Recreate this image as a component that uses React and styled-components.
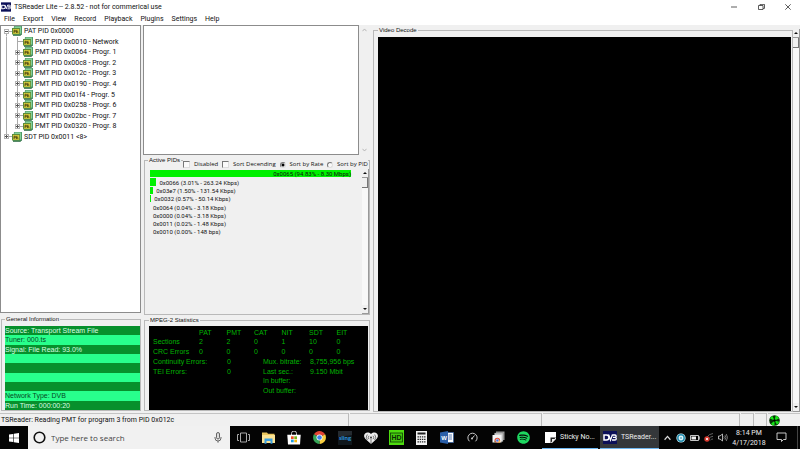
import styled, { createGlobalStyle, css } from "styled-components";
import { FaSpotify } from "react-icons/fa";

const uiFont = `Roboto, "Noto Sans", sans-serif`;
const classicFont = `"Liberation Sans", Arial, sans-serif`;
const optionFont = `"Open Sans", "Noto Sans", sans-serif`;

const GlobalStyle = createGlobalStyle`
	*, *::before, *::after { box-sizing: border-box; }
	body { margin: 0; background: #f0f0f0; color: #111; font-family: ${classicFont}; font-size: 7px; }
	button, input { font: inherit; color: inherit; }
	button { border: 0; padding: 0; background: none; }
	svg { display: block; flex: none; }
`;

const treeItems = [
	{ label: "PAT PID 0x0000", level: 0, sign: "-", line: "first" },
	{ label: "PMT PID 0x0010 - Network", level: 1 },
	{ label: "PMT PID 0x0064 - Progr. 1", level: 1, sign: "+" },
	{ label: "PMT PID 0x00c8 - Progr. 2", level: 1, sign: "+" },
	{ label: "PMT PID 0x012c - Progr. 3", level: 1, sign: "+" },
	{ label: "PMT PID 0x0190 - Progr. 4", level: 1, sign: "+" },
	{ label: "PMT PID 0x01f4 - Progr. 5", level: 1, sign: "+" },
	{ label: "PMT PID 0x0258 - Progr. 6", level: 1, sign: "+" },
	{ label: "PMT PID 0x02bc - Progr. 7", level: 1, sign: "+" },
	{ label: "PMT PID 0x0320 - Progr. 8", level: 1, sign: "+", line: "last" },
	{ label: "SDT PID 0x0011 <8>", level: 0, sign: "+", line: "last" },
];

const pids = [
	{ share: 94.83, label: "0x0065 (94.83% - 8.30 Mbps)" },
	{ share: 3.01, label: "0x0066 (3.01% - 263.24 Kbps)" },
	{ share: 1.5, label: "0x03e7 (1.50% - 131.54 Kbps)" },
	{ share: 0.57, label: "0x0032 (0.57% - 50.14 Kbps)" },
	{ share: 0.04, label: "0x0064 (0.04% - 3.18 Kbps)" },
	{ share: 0.04, label: "0x0000 (0.04% - 3.18 Kbps)" },
	{ share: 0.02, label: "0x0011 (0.02% - 1.48 Kbps)" },
	{ share: 0, label: "0x0010 (0.00% - 148 bps)" },
];

const infoRows = [
	"Source: Transport Stream File",
	"Tuner: 000.ts",
	"Signal: File Read: 93.0%",
	"",
	"",
	"",
	"",
	"Network Type: DVB",
	"Run Time: 000:00:20",
];

const tables = ["PAT", "PMT", "CAT", "NIT", "SDT", "EIT"];
const counters = [
	{ name: "Sections", values: [2, 2, 0, 1, 10, 0] },
	{ name: "CRC Errors", values: [0, 0, 0, 0, 0, 0] },
];

/* window frame */

const Desktop = styled.div`
	display: flex;
	flex-direction: column;
	height: 100vh;
	overflow: hidden;
`;

const TitleBar = styled.header`
	display: flex;
	align-items: center;
	gap: 3px;
	height: 13px;
	flex: none;
	padding-left: 1px;
	background: #fff;
	font-family: ${uiFont};
	font-size: 7px;
`;

const Title = styled.h1`
	margin: 0;
	flex: 1;
	font-size: 7px;
	font-weight: 400;
	line-height: 12px;
	white-space: nowrap;
`;

const WindowButton = styled.button`
	display: flex;
	align-items: center;
	justify-content: center;
	width: 24px;
	height: 12px;
`;

const MenuBar = styled.nav`
	display: flex;
	align-items: center;
	gap: 8px;
	height: 12px;
	flex: none;
	padding-left: 4px;
	background: #fff;
	font-family: ${uiFont};
	font-size: 7px;
`;

const MenuItem = styled.button`
	line-height: 12px;
`;

const Workspace = styled.main`
	display: grid;
	grid-template-columns: 141px 228px minmax(0, 1fr);
	gap: 2px;
	flex: 1;
	min-height: 0;
`;

const Column = styled.div`
	display: flex;
	flex-direction: ${(p) => (p.$row ? "row" : "column")};
	min-width: 0;
	min-height: 0;
`;

const Group = styled.fieldset`
	display: flex;
	flex-direction: column;
	min-width: 0;
	min-height: 0;
	margin: ${(p) => p.$margin || "0"};
	padding: ${(p) => p.$padding || "0"};
	border: 1px solid #b9b9b9;
	flex: ${(p) => (p.$grow ? "1" : "none")};
`;

const GroupLabel = styled.legend`
	margin-left: ${(p) => p.$indent || "0"};
	padding: 0 1px;
	font-size: 6px;
	line-height: 8px;
`;

/* tree */

const TreePanel = styled.div`
	flex: 1;
	min-height: 0;
	margin-bottom: 2px;
	background: #fff;
	border: 1px solid #8c8c8c;
`;

const Tree = styled.ul`
	display: grid;
	grid-auto-rows: 1fr;
	height: 116px;
	margin: 0;
	padding: 0;
	list-style: none;
	font-family: ${uiFont};
`;

const TreeRow = styled.li`
	display: flex;
	align-items: stretch;
	white-space: nowrap;
`;

const Branch = styled.span`
	display: flex;
	align-items: center;
	justify-content: center;
	width: 11px;
	background-image: ${(p) => (p.$stub ? "linear-gradient(#aaa, #aaa)," : "")}
		linear-gradient(#aaa, #aaa);
	background-repeat: no-repeat;
	background-size: ${(p) => (p.$stub ? "6px 1px," : "")} 1px ${(p) => (p.$line ? "50%" : "100%")};
	background-position: ${(p) => (p.$stub ? "right center," : "")} 5px ${(p) => (p.$line === "first" ? "100%" : "0")};
`;

const Expander = styled.button`
	display: flex;
	background: #fff;
`;

const TreeLabel = styled.span`
	display: flex;
	align-items: center;
	gap: 2px;
`;

/* list and scrollbars */

const ListRow = styled.div`
	display: flex;
	height: 130px;
	flex: none;
	margin-bottom: 1px;
`;

const ListBox = styled.div`
	flex: 1;
	background: #fff;
	border: 1px solid #8c8c8c;
`;

const FlatScroll = styled.div`
	display: flex;
	flex-direction: column;
	align-items: center;
	justify-content: space-between;
	width: 12px;
	padding: 3px 2px 3px 0;
`;

const Scroll = styled.div`
	display: flex;
	flex-direction: column;
	width: 7px;
	flex: none;
	margin-top: ${(p) => p.$top || "0"};
	background: #f8f8f8;
	border-right: 1px solid #999;
`;

const ScrollButton = styled.button`
	display: flex;
	align-items: center;
	justify-content: center;
	height: 9px;
	background: #f0f0f0;
	border-bottom: 1px solid #999;
`;

const ScrollThumb = styled.div`
	height: 10px;
	margin-bottom: auto;
	background: #f0f0f0;
	border-right: 1px solid #777;
	border-bottom: 1px solid #777;
`;

/* active pids */

const Options = styled.div`
	display: flex;
	align-items: center;
	justify-content: space-between;
	height: 9px;
	margin: -4px 1px 0 38px;
	background: #f0f0f0;
	font-family: ${optionFont};
	font-size: 6px;
`;

const Option = styled.label`
	display: flex;
	align-items: center;
	gap: 4px;
	white-space: nowrap;
	line-height: 9px;
`;

const Tick = styled.input`
	appearance: none;
	width: 7px;
	height: 7px;
	margin: 0;
	background: #fafafa;
	border: 1px solid #ddd;
	border-top-color: #777;
	border-left-color: #777;
`;

const Radio = styled(Tick)`
	width: 6px;
	height: 6px;
	border-radius: 50%;
	&:checked {
		background: radial-gradient(circle, #000 0 1px, #fff 2px);
	}
`;

const PidArea = styled.div`
	display: flex;
	flex: 1;
	min-height: 0;
`;

const PidList = styled.ul`
	display: grid;
	grid-auto-rows: 1fr;
	flex: 1;
	height: 66px;
	margin: 1px 0 0 5px;
	padding: 0;
	list-style: none;
	font-family: ${uiFont};
	font-size: 6px;
`;

const PidRow = styled.li`
	display: flex;
	align-items: center;
	gap: 3px;
	min-width: 0;
	white-space: nowrap;
`;

const PidBar = styled.span`
	display: flex;
	flex: none;
	align-items: center;
	justify-content: flex-end;
	align-self: stretch;
	margin-bottom: 1px;
	background: #00f000;
`;

/* general information */

const InfoList = styled.ul`
	display: grid;
	grid-auto-rows: 1fr;
	height: 84px;
	margin: 0;
	padding: 0;
	list-style: none;
`;

const InfoRow = styled.li`
	display: flex;
	align-items: center;
	white-space: nowrap;
	background: #28ff8c;
	color: #06491f;
	&:nth-child(odd) {
		background: #07902c;
		color: #d8ffe4;
	}
`;

/* statistics */

const StatsScreen = styled.div`
	height: 84px;
	padding: 2px 4px;
	background: #000;
	color: #00b400;
`;

const StatsTable = styled.table`
	table-layout: fixed;
	width: 100%;
	height: 28px;
	border-collapse: collapse;
	th, td {
		padding: 0;
		text-align: left;
		font-weight: 400;
		line-height: 9px;
	}
	th:first-child {
		width: 46px;
	}
`;

const Totals = styled.dl`
	display: grid;
	grid-template-columns: 74px 36px 47px 1fr;
	grid-auto-rows: 1fr;
	height: 38px;
	margin: 1px 0 0;
	line-height: 9px;
	white-space: nowrap;
	dd {
		margin: 0;
	}
	dt.right {
		grid-column: 3;
	}
`;

/* video */

const VideoScreen = styled.div`
	flex: 1;
	background: #000;
`;

/* status bar */

const StatusBar = styled.footer`
	display: grid;
	grid-template-columns: 349fr 193fr 197fr 13px 12px 32px;
	gap: 1px;
	height: 14px;
	flex: none;
	padding-top: 1px;
	background: #f0f0f0;
	font-family: ${uiFont};
	font-size: 7px;
`;

const StatusCell = styled.div`
	display: flex;
	align-items: center;
	padding-left: 1px;
	border-top: 1px solid #c4c4c4;
	border-right: ${(p) => (p.$last ? "0" : "1px solid #bbb")};
	line-height: 10px;
	white-space: nowrap;
`;

/* task bar */

const TaskBar = styled.nav`
	display: flex;
	height: 23px;
	flex: none;
	background: #040404;
	color: #eee;
	font-family: ${uiFont};
	font-size: 7px;
`;

const StartButton = styled.button`
	display: flex;
	align-items: center;
	justify-content: center;
	width: 28px;
`;

const SearchBox = styled.label`
	display: flex;
	align-items: center;
	gap: 5px;
	width: 202px;
	padding: 0 8px 0 5px;
	background: #f1f1f1;
	color: #333;
`;

const SearchInput = styled.input`
	flex: 1;
	min-width: 0;
	padding: 0;
	border: 0;
	outline: 0;
	background: none;
	font-family: ${optionFont};
	font-size: 8px;
	&::placeholder {
		color: #444;
		opacity: 1;
	}
`;

const AppIcons = styled.div`
	display: flex;
	justify-content: space-between;
	width: 308px;
	padding: 0 2px 0 1px;
`;

const AppButton = styled.button`
	display: flex;
	align-items: center;
	justify-content: center;
	width: 25px;
`;

const TaskButton = styled.button`
	display: flex;
	align-items: center;
	gap: 4px;
	padding: 0 4px 0 3px;
	width: ${(p) => p.$width};
	margin-left: ${(p) => p.$space || "0"};
	border-bottom: 1px solid #6fb7f0;
	white-space: nowrap;
	${(p) => p.$active && css`
		background: #34373a;
	`}
`;

const Tray = styled.div`
	display: flex;
	align-items: center;
	justify-content: flex-end;
	flex: 1;
	padding-right: 2px;
`;

const TrayButton = styled.button`
	display: flex;
	align-items: center;
	justify-content: center;
	width: 14px;
	height: 100%;
`;

const Clock = styled.time`
	width: 38px;
	text-align: center;
	line-height: 10px;
`;

const Notifications = styled(TrayButton)`
	width: 27px;
	margin-right: 2px;
`;

const ShowDesktop = styled.button`
	width: 1px;
	height: 100%;
	background: #444;
`;

/* drawings */

function DvbLogo({ width = 10, height = 10 }) {
	return (
		<svg width={width} height={height} viewBox="0 0 14 13">
			<rect width="14" height="13" fill="#0c1058" />
			<path d="M1 4h2.5a2.5 2.5 0 0 1 0 5H1z" fill="none" stroke="#fff" strokeWidth="1.5" />
			<path d="M5.5 3.5 7.5 9 9.5 3.5" fill="none" stroke="#fff" strokeWidth="1.3" />
			<path d="M9.5 4H12a1.2 1.2 0 0 1 0 2.4h-2H12A1.3 1.3 0 0 1 12 9H9" fill="none" stroke="#fff" strokeWidth="1.3" />
		</svg>
	);
}

function TableIcon() {
	return (
		<svg width="10" height="10" viewBox="0 0 10 10">
			<path d="M2 0h8v8L8.500 9.500H1V8z" fill="#4f9a68" />
			<path d="M2.500.500h6.500v7H8V2.200H2.500z" fill="#86d098" />
			<path d="M0 2h8v6.500H0z" fill="#5c8d3c" />
			<path d="M1 3h6.200v4.800H1z" fill="#d6cc3c" />
			<path d="M2 7V4.300h1.400v1.400H2M4.500 7V4.300h1M4.500 5.600h1.300V7" fill="none" stroke="#4a4410" strokeWidth=".8" />
			<path d="M1 9.300h7.500L9.700 8" fill="none" stroke="#2b6640" strokeWidth=".8" />
		</svg>
	);
}

function SignIcon({ sign }) {
	return (
		<svg width="5" height="5" viewBox="0 0 5 5" shapeRendering="crispEdges">
			<rect width="5" height="5" fill="#b4b4b4" />
			<rect x="1" y="1" width="3" height="3" fill="#fff" />
			<path d="M1 2h3v1H1z" fill="#555" />
			{sign === "+" && <path d="M2 1h1v3H2z" fill="#555" />}
		</svg>
	);
}

function Arrow({ down }) {
	return (
		<svg width="4" height="2" viewBox="0 0 4 2">
			<path d={down ? "M0 0h4L2 2z" : "M0 2h4L2 0z"} fill="#111" />
		</svg>
	);
}

function Chevron({ down, color = "#aaa", width = 5 }) {
	return (
		<svg width={width} height={width - 1} viewBox="0 0 6 5">
			<path d={down ? "M.5 1 3 3.8 5.5 1" : "M.5 4 3 1.2 5.5 4"} fill="none" stroke={color} />
		</svg>
	);
}

function RadiationIcon() {
	return (
		<svg width="11" height="11" viewBox="-5.5 -5.5 11 11">
			<circle r="5.3" fill="#063306" />
			<path d="M0 0-4.6-2A5 5 0 0 1-2-4.6zM0 0 1.2-4.9A5 5 0 0 1 4.6-2zM0 0 4.8 1.2A5 5 0 0 1 2.5 4.3zM0 0 0 5A5 5 0 0 1-3.6 3.4z" fill="#16e316" />
			<circle r="1.3" fill="#000" />
		</svg>
	);
}

const WindowsLogo = () => (
	<svg width="10" height="10" viewBox="0 0 10 10">
		<path d="M0 1.5 4.2.9v3.8H0zM4.8.8 10 0v4.7H4.8zM0 5.3h4.2v3.8L0 8.5zM4.8 5.3H10V10l-5.2-.8z" fill="#fff" />
	</svg>
);

const CortanaIcon = () => (
	<svg width="13" height="13" viewBox="0 0 13 13">
		<circle cx="6.5" cy="6.5" r="5.3" fill="none" stroke="#111" strokeWidth="1.6" />
	</svg>
);

const MicIcon = () => (
	<svg width="8" height="11" viewBox="0 0 8 11">
		<rect x="2.5" y=".5" width="3" height="6.5" rx="1.5" fill="#ddd" stroke="#444" strokeWidth=".8" />
		<path d="M1 5v1a3 3 0 0 0 6 0V5M4 9v1.7" fill="none" stroke="#444" strokeWidth=".8" />
	</svg>
);

const TaskViewIcon = () => (
	<svg width="13" height="11" viewBox="0 0 13 11">
		<path d="M3.5 1h6v9h-6zM2 2.5H.5v6H2M11 2.5h1.5v6H11" fill="none" stroke="#bbb" strokeWidth=".9" />
	</svg>
);

const FolderIcon = () => (
	<svg width="13" height="12" viewBox="0 0 13 12">
		<path d="M0 .5h5l1 1.3h6.5V11H0z" fill="#e8c45c" />
		<path d="M0 3h13v8H0z" fill="#fbe394" />
		<path d="M2.500 11.800V6.500h8v5.300H8.500V9h-4v2.800z" fill="#3c9fdf" />
	</svg>
);

const StoreIcon = () => (
	<svg width="14" height="14" viewBox="0 0 14 14">
		<path d="M4.5 4V2.5a2 2 0 0 1 5 0V4" fill="none" stroke="#ccc" />
		<path d="M.3 3.7h13.4L13 13.5H1z" fill="#fff" />
		<path d="M4 5.3h2.7V8H4z" fill="#ed4f24" />
		<path d="M7.3 5.3H10V8H7.3z" fill="#74b51c" />
		<path d="M4 8.6h2.7v2.7H4z" fill="#1e9fe3" />
		<path d="M7.3 8.6H10v2.7H7.3z" fill="#f5b60d" />
	</svg>
);

const ChromeIcon = () => (
	<svg width="13" height="13" viewBox="-6.5 -6.5 13 13">
		<path d="M0 0-5.6-3.2A6.5 6.5 0 0 1 5.6-3.2z" fill="#e24434" />
		<path d="M0 0 5.6-3.2A6.5 6.5 0 0 1 0 6.5z" fill="#f8cf40" />
		<path d="M0 0 0 6.5A6.5 6.5 0 0 1-5.6-3.2z" fill="#35a457" />
		<circle r="3" fill="#fff" />
		<circle r="2.3" fill="#3e80e8" />
	</svg>
);

const SlingIcon = () => (
	<svg width="14" height="14" viewBox="0 0 14 14">
		<rect width="14" height="14" fill="#10171c" />
		<path d="M0 0h14v4L0 6z" fill="#252b30" />
		<text x="7" y="9" textAnchor="middle" fontFamily="Lato" fontSize="6" fontWeight="700" fill="#2f9be0">sling</text>
	</svg>
);

const HeartIcon = () => (
	<svg width="14" height="12" viewBox="0 0 14 12">
		<path d="M7 12 2 7.500C-3 2.500 3-2 7 2c4-4 10 .5 5 5.500z" fill="#eee" />
		<path d="M7 6.500V12M5 3.800a2.500 2.500 0 0 0 0 3.400M9 3.800a2.500 2.500 0 0 1 0 3.400M3.300 2.500a4.500 4.500 0 0 0 0 5.500M10.700 2.500a4.500 4.500 0 0 1 0 5.500" fill="none" stroke="#222" strokeWidth=".6" />
		<circle cx="7" cy="5.500" r=".9" fill="#222" />
	</svg>
);

const HdIcon = () => (
	<svg width="15" height="15" viewBox="0 0 15 15">
		<rect width="15" height="15" fill="#4fdc10" />
		<rect x="1.500" y="3" width="12" height="9" fill="#43c60e" stroke="#0d3a05" strokeWidth=".8" />
		<text x="7.500" y="10" textAnchor="middle" fontFamily="Liberation Sans" fontSize="7" fontWeight="700" fill="#0a2a04">HD</text>
	</svg>
);

const CalculatorIcon = () => (
	<svg width="11" height="14" viewBox="0 0 11 14">
		<rect width="11" height="14" fill="#f2f2f2" />
		<path d="M1.500 1.500h8v2h-8z" fill="#222" />
		<path d="M1.500 5.800h8M1.500 8.300h8M1.500 10.800h8" stroke="#222" strokeWidth="1.300" strokeDasharray="1.400 .8" />
	</svg>
);

const WordIcon = () => (
	<svg width="14" height="13" viewBox="0 0 14 13">
		<path d="M7 1.500h6.500v10H7z" fill="#fff" stroke="#2b579a" strokeWidth=".7" />
		<path d="M8.500 4H12M8.500 6H12M8.500 8H12" stroke="#2b579a" strokeWidth=".8" />
		<path d="M0 1.500 8 0v13l-8-1.500z" fill="#2b5fa8" />
		<text x="4" y="8.700" textAnchor="middle" fontFamily="Liberation Sans" fontSize="6" fontWeight="700" fill="#fff">W</text>
	</svg>
);

const GaugeIcon = () => (
	<svg width="11" height="11" viewBox="0 0 11 11">
		<path d="M2.500 9.300a4.600 4.600 0 1 1 6 0M5 6.500 7.500 3.500" fill="none" stroke="#ddd" strokeWidth=".9" />
		<circle cx="5" cy="6.500" r=".9" fill="#ddd" />
	</svg>
);

const CardsIcon = () => (
	<svg width="13" height="13" viewBox="0 0 13 13">
		<path d="M4 .5h8.500V9H4z" fill="#999" />
		<path d="M2.500 2H11v8.500H2.500z" fill="#ccc" stroke="#777" strokeWidth=".4" />
		<path d="M.5 4h9v7.500h-9z" fill="#f4f4f4" />
		<path d="M2.500 9.500a2.800 2.800 0 0 1 5.600 0v2H2.500z" fill="#e44a36" />
		<path d="M2.500 9a3 3 0 0 0 1.500 2.500H2.500z" fill="#31a354" />
		<path d="M5.500 11.500 8.100 9v2.500z" fill="#f8cf40" />
		<circle cx="5.300" cy="9.500" r="1.400" fill="#3e80e8" stroke="#fff" strokeWidth=".5" />
	</svg>
);

const NoteIcon = () => (
	<svg width="11" height="11" viewBox="0 0 11 11">
		<path d="M0 0h11v6.500L6.500 11H0z" fill="#fff" />
		<path d="M5.500 5.500H11L5.500 11z" fill="#222" />
		<path d="M7 7h4l-4 4z" fill="#eee" />
	</svg>
);

const SyncIcon = () => (
	<svg width="10" height="10" viewBox="0 0 10 10">
		<circle cx="5" cy="5" r="4.600" fill="#dff4fa" />
		<circle cx="5" cy="5" r="3.200" fill="none" stroke="#258eaf" strokeWidth="1.500" />
		<path d="M4 5h2" stroke="#258eaf" />
	</svg>
);

const BatteryIcon = () => (
	<svg width="10" height="6" viewBox="0 0 10 6">
		<path d="M.5.500h8v5h-8zM9 2h1v2H9" fill="none" stroke="#ddd" strokeWidth=".9" />
		<path d="M1.500 1.500H6v3H1.500z" fill="#eee" />
	</svg>
);

const NetworkIcon = () => (
	<svg width="10" height="9" viewBox="0 0 10 9">
		<path d="M3 4Q5 1 9 .5M5 5.500Q6.500 3.500 9 3.300M6.500 7Q7.500 6 9 6" fill="none" stroke="#777" strokeWidth=".8" />
		<circle cx="3" cy="6" r="2.700" fill="#d93a30" />
		<path d="m2 5 2 2M4 5 2 7" stroke="#fff" strokeWidth=".8" />
	</svg>
);

const VolumeIcon = () => (
	<svg width="10" height="9" viewBox="0 0 10 9">
		<path d="M.5 3H2l2.500-2v7L2 6H.5z" fill="none" stroke="#ddd" strokeWidth=".8" />
		<path d="M5.800 3.300q1 1.200 0 2.400M7 2.200q2 2.300 0 4.600M8.200 1q2.800 3.500 0 7" fill="none" stroke="#aaa" strokeWidth=".7" />
	</svg>
);

const NoticeIcon = () => (
	<svg width="11" height="11" viewBox="0 0 11 11">
		<path d="M1 1h9v6.500H7.500l-2 2v-2H1z" fill="none" stroke="#ddd" strokeWidth=".9" />
	</svg>
);

const apps = [
	{ name: "Task View", icon: <TaskViewIcon /> },
	{ name: "File Explorer", icon: <FolderIcon /> },
	{ name: "Store", icon: <StoreIcon /> },
	{ name: "Chrome", icon: <ChromeIcon /> },
	{ name: "Sling", icon: <SlingIcon /> },
	{ name: "iHeartRadio", icon: <HeartIcon /> },
	{ name: "HDHomeRun", icon: <HdIcon /> },
	{ name: "Calculator", icon: <CalculatorIcon /> },
	{ name: "Word", icon: <WordIcon /> },
	{ name: "Speed Test", icon: <GaugeIcon /> },
	{ name: "Chrome Apps", icon: <CardsIcon /> },
	{ name: "Spotify", icon: <FaSpotify size={13} color="#1ed760" /> },
];

function ClassicScroll({ top }) {
	return (
		<Scroll $top={top}>
			<ScrollButton aria-label="Scroll up"><Arrow /></ScrollButton>
			<ScrollThumb />
			<ScrollButton aria-label="Scroll down"><Arrow down /></ScrollButton>
		</Scroll>
	);
}

function TableTree() {
	return (
		<TreePanel>
			<Tree>
				{treeItems.map((item) => (
					<TreeRow key={item.label}>
						{item.level === 1 && <Branch />}
						<Branch $stub $line={item.line}>
							{item.sign && (
								<Expander aria-label={item.sign === "+" ? "Expand" : "Collapse"}>
									<SignIcon sign={item.sign} />
								</Expander>
							)}
						</Branch>
						<TreeLabel><TableIcon />{item.label}</TreeLabel>
					</TreeRow>
				))}
			</Tree>
		</TreePanel>
	);
}

function ActivePids() {
	return (
		<Group $grow $margin="0 1px 0 1px">
			<GroupLabel $indent="3px">Active PIDs</GroupLabel>
			<Options>
				<Option><Tick type="checkbox" />Disabled</Option>
				<Option><Tick type="checkbox" />Sort Decending</Option>
				<Option><Radio type="radio" name="sort" defaultChecked />Sort by Rate</Option>
				<Option><Radio type="radio" name="sort" />Sort by PID</Option>
			</Options>
			<PidArea>
				<PidList>
					{pids.map((pid) => (
						<PidRow key={pid.label}>
							<PidBar style={{ width: pid.share < 0.1 ? 0 : `${pid.share}%` }}>
								{pid.share > 50 && pid.label}
							</PidBar>
							{pid.share <= 50 && pid.label}
						</PidRow>
					))}
				</PidList>
				<ClassicScroll />
			</PidArea>
		</Group>
	);
}

function Statistics() {
	return (
		<Group $margin="1px 1px 1px 1px" $padding="2px 1px 0 4px">
			<GroupLabel>MPEG-2 Statistics</GroupLabel>
			<StatsScreen>
				<StatsTable>
					<thead>
						<tr>
							<th />
							{tables.map((name) => <th key={name} scope="col">{name}</th>)}
						</tr>
					</thead>
					<tbody>
						{counters.map((row) => (
							<tr key={row.name}>
								<th scope="row">{row.name}</th>
								{row.values.map((value, i) => <td key={tables[i]}>{value}</td>)}
							</tr>
						))}
					</tbody>
				</StatsTable>
				<Totals>
					<dt>Continuity Errors:</dt><dd>0</dd>
					<dt>Mux. bitrate:</dt><dd>8,755,956 bps</dd>
					<dt>TEI Errors:</dt><dd>0</dd>
					<dt>Last sec.:</dt><dd>9.150 Mbit</dd>
					<dt className="right">In buffer:</dt><dd />
					<dt className="right">Out buffer:</dt><dd />
				</Totals>
			</StatsScreen>
		</Group>
	);
}

export default function App() {
	return (
		<Desktop>
			<GlobalStyle />
			<TitleBar>
				<DvbLogo />
				<Title>TSReader Lite -- 2.8.52 - not for commerical use</Title>
				<WindowButton aria-label="Minimize">
					<svg width="6" height="6" viewBox="0 0 6 6"><path d="M0 3h6" stroke="#333" strokeWidth=".8" /></svg>
				</WindowButton>
				<WindowButton aria-label="Restore">
					<svg width="7" height="6" viewBox="0 0 7 6"><path d="M.5 1.500h4.500v4H.5zM2 1.500V.4h4.500v4H5" fill="none" stroke="#333" strokeWidth=".8" /></svg>
				</WindowButton>
				<WindowButton aria-label="Close">
					<svg width="6" height="6" viewBox="0 0 6 6"><path d="m.3.3 5.400 5.400M5.700.3.3 5.700" stroke="#333" strokeWidth=".8" /></svg>
				</WindowButton>
			</TitleBar>
			<MenuBar>
				{["File", "Export", "View", "Record", "Playback", "Plugins", "Settings", "Help"].map((name) => (
					<MenuItem key={name}>{name}</MenuItem>
				))}
			</MenuBar>

			<Workspace>
				<Column>
					<TableTree />
					<Group $margin="0 0 1px 1px" $padding="3px 0 0 3px">
						<GroupLabel>General Information</GroupLabel>
						<InfoList>
							{infoRows.map((text, i) => <InfoRow key={i}>{text}</InfoRow>)}
						</InfoList>
					</Group>
				</Column>
				<Column>
					<ListRow>
						<ListBox />
						<FlatScroll><Chevron /><Chevron down /></FlatScroll>
					</ListRow>
					<ActivePids />
					<Statistics />
				</Column>
				<Column $row>
					<Group $grow $margin="1px 0 0 0" $padding="3px 1px 0 4px">
						<GroupLabel>Video Decode</GroupLabel>
						<VideoScreen />
					</Group>
					<ClassicScroll top="4px" />
				</Column>
			</Workspace>

			<StatusBar>
				<StatusCell>TSReader: Reading PMT for program 3 from PID 0x012c</StatusCell>
				<StatusCell />
				<StatusCell />
				<StatusCell />
				<StatusCell />
				<StatusCell $last><RadiationIcon /></StatusCell>
			</StatusBar>

			<TaskBar>
				<StartButton aria-label="Start"><WindowsLogo /></StartButton>
				<SearchBox>
					<CortanaIcon />
					<SearchInput placeholder="Type here to search" aria-label="Search" />
					<MicIcon />
				</SearchBox>
				<AppIcons>
					{apps.map((app) => <AppButton key={app.name} aria-label={app.name}>{app.icon}</AppButton>)}
				</AppIcons>
				<TaskButton $width="56px" $space="4px"><NoteIcon />Sticky No...</TaskButton>
				<TaskButton $width="59px" $space="2px" $active><DvbLogo width={14} height={13} />TSReader...</TaskButton>
				<Tray>
					<TrayButton aria-label="Show hidden icons"><Chevron color="#ddd" width={7} /></TrayButton>
					<TrayButton aria-label="Sync"><SyncIcon /></TrayButton>
					<TrayButton aria-label="Battery"><BatteryIcon /></TrayButton>
					<TrayButton aria-label="Network"><NetworkIcon /></TrayButton>
					<TrayButton aria-label="Volume"><VolumeIcon /></TrayButton>
					<Clock>8:14 PM<br />4/17/2018</Clock>
					<Notifications aria-label="Notifications"><NoticeIcon /></Notifications>
					<ShowDesktop aria-label="Show desktop" />
				</Tray>
			</TaskBar>
		</Desktop>
	);
}
